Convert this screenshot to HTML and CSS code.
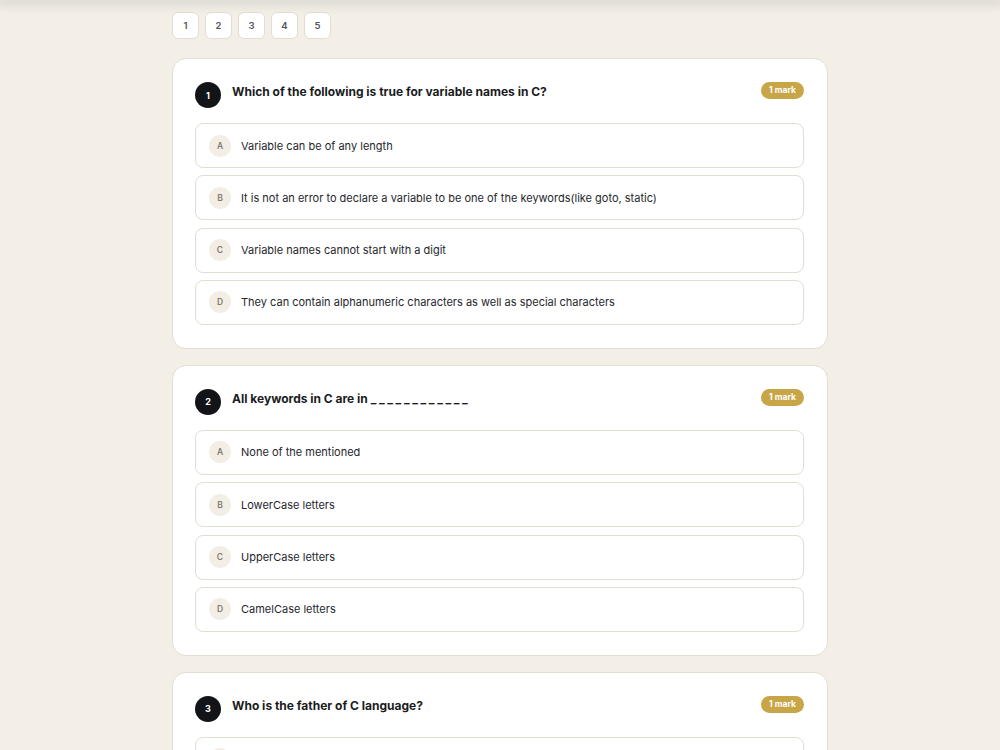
FILE: index.html
```html
<!DOCTYPE html>
<html lang="en">
<head>
  <meta charset="UTF-8">
  <meta name="viewport" content="width=device-width, initial-scale=1.0">
  <title>C Programming Quiz</title>
  <link rel="stylesheet" href="styles.css">
</head>
<body>
  <div class="topShadow"></div>

  <main class="quiz">
    <nav class="paginas">
      <button class="pagina">1</button>
      <button class="pagina">2</button>
      <button class="pagina">3</button>
      <button class="pagina">4</button>
      <button class="pagina">5</button>
    </nav>

    <section class="pregunta">
      <div class="cabecera">
        <span class="numero">1</span>
        <h2 class="titulo">Which of the following is true for variable names in C?</h2>
        <span class="marca">1 mark</span>
      </div>
      <ul class="opciones">
        <li class="opcion"><span class="letra">A</span>Variable can be of any length</li>
        <li class="opcion"><span class="letra">B</span>It is not an error to declare a variable to be one of the keywords(like goto, static)</li>
        <li class="opcion"><span class="letra">C</span>Variable names cannot start with a digit</li>
        <li class="opcion"><span class="letra">D</span>They can contain alphanumeric characters as well as special characters</li>
      </ul>
    </section>

    <section class="pregunta">
      <div class="cabecera">
        <span class="numero">2</span>
        <h2 class="titulo">All keywords in C are in <span class="hueco">____________</span></h2>
        <span class="marca">1 mark</span>
      </div>
      <ul class="opciones">
        <li class="opcion"><span class="letra">A</span>None of the mentioned</li>
        <li class="opcion"><span class="letra">B</span>LowerCase letters</li>
        <li class="opcion"><span class="letra">C</span>UpperCase letters</li>
        <li class="opcion"><span class="letra">D</span>CamelCase letters</li>
      </ul>
    </section>

    <section class="pregunta">
      <div class="cabecera">
        <span class="numero">3</span>
        <h2 class="titulo">Who is the father of C language?</h2>
        <span class="marca">1 mark</span>
      </div>
      <ul class="opciones">
        <li class="opcion"><span class="letra">A</span>Steve Jobs</li>
        <li class="opcion"><span class="letra">B</span>James Gosling</li>
        <li class="opcion"><span class="letra">C</span>Dennis Ritchie</li>
        <li class="opcion"><span class="letra">D</span>Rasmus Lerdorf</li>
      </ul>
    </section>
  </main>
</body>
</html>
```

FILE: styles.css
```css
body {
  margin: 0;
  padding: 0;
  font-family: Inter, "Liberation Sans", sans-serif;
  background-color: #f3efe7;
  color: #1d1f24;
}

.topShadow {
  position: fixed;
  top: 0;
  left: 0;
  width: 100%;
  height: 0;
  box-shadow: 0 0 12px 3px rgba(0, 0, 0, 0.18);
  z-index: 5;
}

.quiz {
  width: 656px;
  margin: 0 auto;
  padding-top: 12px;
}

.paginas {
  display: flex;
  gap: 6px;
  margin-bottom: 19px;
}

.pagina {
  width: 27px;
  height: 27px;
  padding: 0;
  background: white;
  border: 1px solid #e4ddd1;
  border-radius: 6px;
  font-family: inherit;
  font-size: 9.5px;
  font-weight: 600;
  color: #4f5562;
}

.pregunta {
  background: white;
  border: 1px solid #e4ddd1;
  border-radius: 14px;
  padding: 23px 23px 23px 22px;
  margin-bottom: 16px;
}

.cabecera {
  display: flex;
  align-items: flex-start;
  gap: 11px;
  margin-bottom: 15px;
}

.numero {
  flex: none;
  width: 26px;
  height: 26px;
  border-radius: 50%;
  background: #121417;
  color: white;
  font-size: 9px;
  font-weight: 700;
  display: flex;
  align-items: center;
  justify-content: center;
}

.titulo {
  flex: 1;
  margin: 1px 0 0;
  font-size: 12px;
  line-height: 18px;
  font-weight: 650;
  color: #1a1c21;
}

.hueco {
  letter-spacing: 2.6px;
}

.marca {
  flex: none;
  background: #c8a648;
  color: white;
  font-size: 8.5px;
  font-weight: 700;
  padding: 0 8px;
  height: 17px;
  line-height: 17px;
  border-radius: 9px;
}

.opciones {
  list-style: none;
  margin: 0;
  padding: 0;
  display: flex;
  flex-direction: column;
  gap: 7.33px;
}

.opcion {
  display: flex;
  align-items: center;
  gap: 10px;
  height: 43px;
  padding: 0 13px;
  border: 1px solid #e4ddd1;
  border-radius: 8px;
  font-size: 11px;
  color: #25272d;
}

.letra {
  flex: none;
  width: 22px;
  height: 22px;
  border-radius: 50%;
  background: #f3eee5;
  color: #857b6e;
  font-size: 8.5px;
  font-weight: 600;
  display: flex;
  align-items: center;
  justify-content: center;
}
```
